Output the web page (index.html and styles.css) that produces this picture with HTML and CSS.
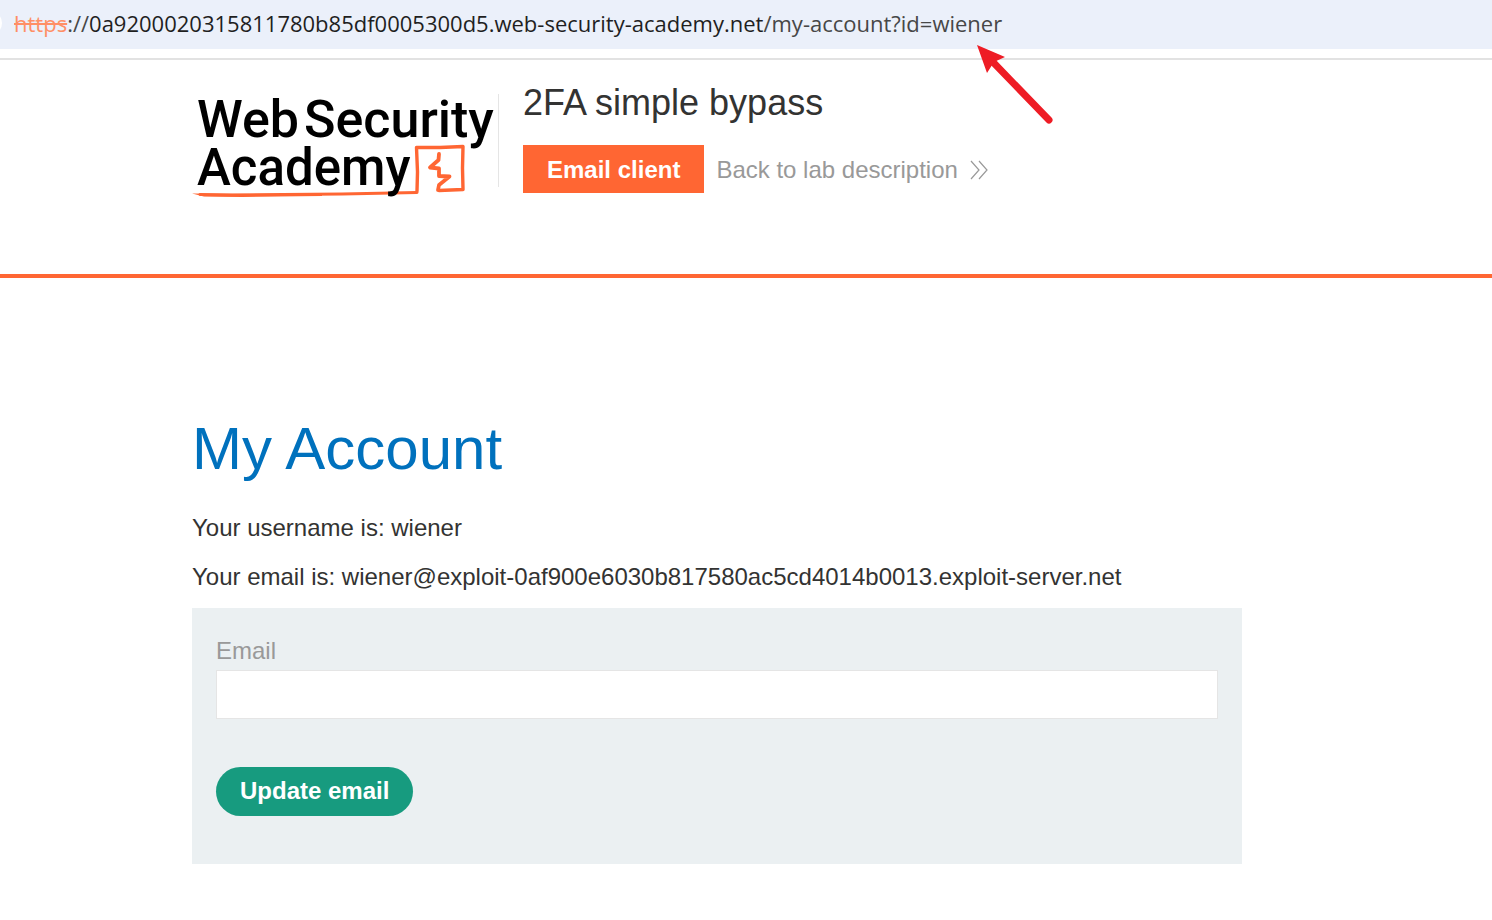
FILE: index.html
```html
<!DOCTYPE html>
<html lang="en">
<head>
<meta charset="utf-8">
<title>2FA simple bypass</title>
<meta name="viewport" content="width=device-width, initial-scale=1">
<link rel="stylesheet" href="styles.css">
</head>
<body>
<div class="address-bar">
  <span class="site-button"></span>
  <div class="url"><span class="scheme">https</span><span class="muted">://</span>0a9200020315811780b85df0005300d5.web-security-academy.net<span class="muted">/my-account?id=wiener</span></div>
</div>
<svg class="arrow" width="90" height="90" viewBox="0 0 90 90" aria-hidden="true">
  <path d="M7 5L35 17L24 22L17 33Z" fill="#ee1c25"/>
  <path d="M21 20L79 80" fill="none" stroke="#ee1c25" stroke-width="7" stroke-linecap="round"/>
</svg>
<header class="lab-header">
  <div class="logo">
    <svg width="300" height="106" viewBox="0 0 300 106" role="img" aria-label="Web Security Academy">
      <path d="M0 101.500L60 102L130 101.500L130 104L50 105L12 104.500Z" fill="#ff6633"/>
      <g fill="none" stroke="#ff6633" stroke-linejoin="round" stroke-linecap="round">
        <path d="M225 99L225.500 80L224.500 55.500L248 55.500L271 54.500L270.500 76L271 97.500L247 98.500" stroke-width="3.400"/>
        <path d="M247 62L246.500 68L238 75.500L247 76.500L247 84L257.500 84.500L247 93L246 98" stroke-width="3.800"/>
        <path d="M225 100.500L150 102L40 103L8 102.500" stroke-width="3"/>
      </g>
      <g class="logo-text">
        <text class="logo-top" x="5" y="45">Web</text>
        <text class="logo-top" x="112" y="45">Security</text>
        <text class="logo-bottom" x="5" y="93">Academy</text>
      </g>
    </svg>
  </div>
  <div class="divider"></div>
  <div class="lab-info">
    <h2>2FA simple bypass</h2>
    <div class="lab-links">
      <a class="email-client" href="#">Email client</a>
      <a class="back-link" href="#">Back to lab description
        <svg width="18" height="20" viewBox="0 0 18 20" aria-hidden="true"><path d="M1 1L9 10L1 19M9 1L17 10L9 19" fill="none" stroke="#999" stroke-width="1.200"/></svg>
      </a>
    </div>
  </div>
</header>
<main class="account">
  <h1>My Account</h1>
  <p>Your username is: wiener</p>
  <p>Your email is: wiener@exploit-0af900e6030b817580ac5cd4014b0013.exploit-server.net</p>
  <form class="email-form">
    <label for="email">Email</label>
    <input id="email" type="email" name="email">
    <button type="button">Update email</button>
  </form>
</main>
</body>
</html>
```
FILE: styles.css
```css
* {
  box-sizing: border-box;
}

body {
  margin: 0;
  background: #fff;
  color: #333332;
  font-family: "Liberation Sans", Arial, sans-serif;
  font-size: 24px;
  line-height: 28px;
}

.address-bar {
  display: flex;
  align-items: center;
  height: 49px;
  padding-bottom: 3px;
  background: #ebf0fa;
  overflow: hidden;
}

.site-button {
  flex: none;
  width: 24px;
  height: 24px;
  margin-left: -22px;
  margin-right: 12px;
  border-radius: 50%;
  background: #fff;
}

.url {
  color: #1f1f1f;
  font-family: "Open Sans", "Noto Sans", sans-serif;
  font-size: 22px;
  white-space: nowrap;
}

.scheme {
  color: #ff8f66;
  text-decoration: line-through;
}

.muted {
  color: #474747;
}

.arrow {
  position: absolute;
  top: 40px;
  left: 970px;
}

.lab-header {
  display: flex;
  margin-top: 9px;
  padding: 22px 192px 76px;
  border-top: 2px solid #e2e2e2;
  border-bottom: 4px solid #ff6633;
}

.logo {
  margin-top: 10px;
  padding-right: 6px;
}

.logo svg {
  display: block;
  overflow: visible;
}

.logo-text {
  font-family: Roboto, sans-serif;
  font-weight: 500;
  fill: #000;
}

.logo-top {
  font-size: 52px;
}

.logo-bottom {
  font-size: 51px;
}

.divider {
  width: 1px;
  margin: 12px 24px 11px 0;
  background: #e5e5e5;
}

.lab-info h2 {
  margin: 0 0 22px;
  font-size: 36px;
  font-weight: 400;
  line-height: 41px;
}

.lab-links {
  display: flex;
  align-items: center;
  gap: 12px;
}

.email-client {
  padding: 11px 24px 9px;
  background: #ff6633;
  color: #fff;
  font-weight: 700;
  text-decoration: none;
}

.back-link {
  display: flex;
  align-items: center;
  gap: 12px;
  padding-top: 2px;
  color: #999;
  text-decoration: none;
}

.account {
  padding: 137px 250px 56px 192px;
}

.account h1 {
  margin: 0 0 31px;
  color: #0071bd;
  font-size: 60px;
  font-weight: 400;
  line-height: 68px;
}

.account p {
  margin: 0 0 21px;
}

.email-form {
  display: flex;
  flex-direction: column;
  align-items: flex-start;
  margin-top: -4px;
  padding: 29px 24px 48px;
  background: #ebf0f2;
}

.email-form label {
  margin-bottom: 5px;
  color: #999;
}

.email-form input {
  width: 100%;
  height: 49px;
  margin-bottom: 48px;
  padding: 8px;
  border: 1px solid #e5e5e5;
  background: #fff;
  font: inherit;
}

.email-form button {
  height: 49px;
  padding: 0 24px 2px;
  border: 0;
  border-radius: 25px;
  background: #179b7f;
  color: #fff;
  font: inherit;
  font-weight: 700;
}
```
